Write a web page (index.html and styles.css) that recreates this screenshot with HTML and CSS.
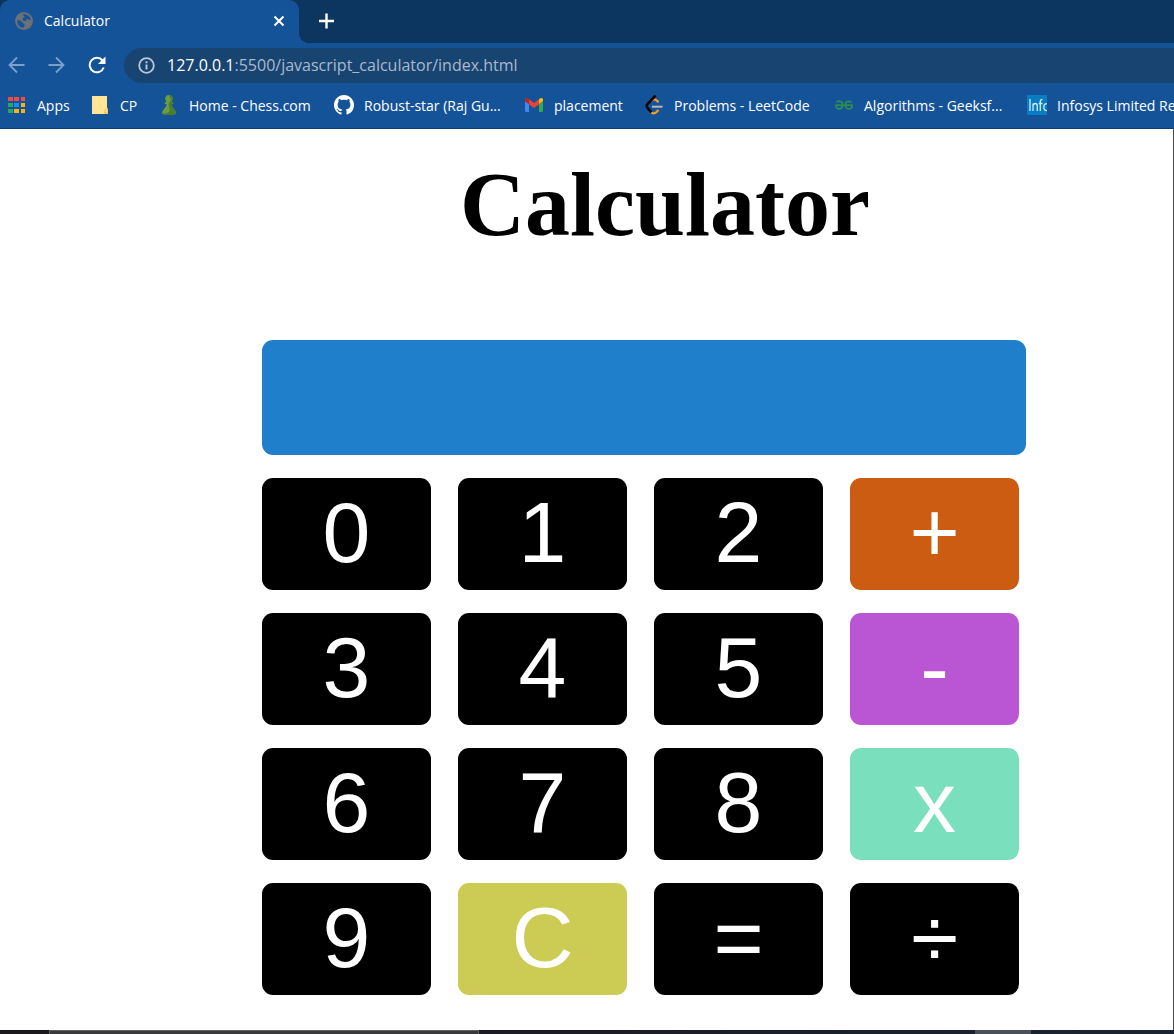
FILE: index.html
```html
<!DOCTYPE html>
<html lang="en">
<head>
<meta charset="utf-8">
<title>Calculator</title>
<link rel="stylesheet" href="styles.css">
</head>
<body>
<header class="browser">
  <div class="tabstrip">
    <div class="tab">
      <svg class="tab-icon" viewBox="0 0 18 18"><circle cx="9" cy="9" r="9" fill="#6b6f76"/><path d="M8 2.200C11 2 15.500 4 15.800 7.800C14 8 13.500 6.500 12 7C11 7.500 12 8.500 10.500 9C9 9.300 7.500 8.500 7.500 7C7.500 5.800 10 6 9.500 4.500C9.200 3.600 8 3.600 8 2.200ZM2.200 8.200C4.500 8.200 6.500 8.500 7 10.500C7.300 11.800 9.500 11.300 9.700 12.800C9.800 14 8.500 14.500 8.500 15.800C5 15.500 2 12.500 2.200 8.200Z" fill="#155399"/></svg>
      <span class="tab-title">Calculator</span>
      <button class="icon-button close" aria-label="Close tab"><svg width="12" height="12" viewBox="0 0 12 12"><path d="M1.500 1.500L10.500 10.500M10.500 1.500L1.500 10.500" stroke="#fff" stroke-width="2"/></svg></button>
    </div>
    <div class="tab-space">
      <button class="icon-button" aria-label="New tab"><svg width="16" height="16" viewBox="0 0 16 16"><path d="M8.500 0.500V15.500M1 8H16" stroke="#fff" stroke-width="2.400"/></svg></button>
    </div>
  </div>
  <div class="toolbar">
    <button class="icon-button" aria-label="Back"><svg width="18" height="18" viewBox="0 0 18 18"><path d="M16.500 9H2M9 1.500L1.500 9L9 16.500" fill="none" stroke="#7da0ca" stroke-width="1.800"/></svg></button>
    <button class="icon-button" aria-label="Forward"><svg width="18" height="18" viewBox="0 0 18 18"><path d="M0.500 9H15M8 1.500L15.500 9L8 16.500" fill="none" stroke="#7da0ca" stroke-width="1.800"/></svg></button>
    <button class="icon-button" aria-label="Reload"><svg width="18" height="18" viewBox="0 0 18 18"><path d="M15.700 11.500A7.200 7.200 0 1 1 14.500 4.500" fill="none" stroke="#fff" stroke-width="2"/><path d="M17.500 0.500V8H10Z" fill="#fff"/></svg></button>
    <div class="omnibox">
      <svg width="17" height="17" viewBox="0 0 17 17"><circle cx="8.500" cy="8.500" r="7.300" fill="none" stroke="#bcc8d5" stroke-width="1.800"/><path d="M8.500 7.500V12.500M8.500 4.300V6.200" stroke="#bcc8d5" stroke-width="1.900"/></svg>
      <span class="url"><span class="host">127.0.0.1</span>:5500/javascript_calculator/index.html</span>
    </div>
  </div>
  <nav class="bookmarks">
    <a href="#"><svg viewBox="0 0 20 20"><path fill="#f04a43" d="M1 2h5v4H1zM7 2h5v4H7zM14 2h4v4h-4z"/><path fill="#2ba55a" d="M1 8h5v4H1zM1 14h5v4H1z"/><path fill="#1d8bf5" d="M7 8h5v4H7z"/><path fill="#f7b21a" d="M14 8h4v4h-4zM7 14h5v4H7zM14 14h4v4h-4z"/></svg><span>Apps</span></a>
    <a href="#"><svg viewBox="0 0 20 20"><path fill="#ffe594" d="M2 1h15v12.500h1V19H2z"/><path fill="#f0cb63" d="M14 19v-4l2-1.500h2V19z"/><path fill="#ffe594" d="M15.500 15h1.500v2h-1.500z"/></svg><span>CP</span></a>
    <a href="#"><svg viewBox="0 0 20 20"><path fill="#6b9f3d" d="M10 0a3.700 3.700 0 0 1 2.500 6.500L14.500 8c0 1-1 1.200-2.300 1.200C12.500 12.500 17 14.500 17 18.500c-3 2-11 2-14 0C3 14.500 7.500 12.500 7.800 9.200 6.500 9.200 5.500 9 5.500 8l2-1.500A3.700 3.700 0 0 1 10 0z"/><path fill="#4b7c32" d="M10 0a3.700 3.700 0 0 1 2.500 6.500L14.500 8c0 1-1 1.200-2.300 1.200C12.500 12.500 17 14.500 17 18.500c-3 2-11 2-14 0 6 .5 9-2 7-6L9.500 8.500 12 5z"/></svg><span>Home - Chess.com</span></a>
    <a href="#"><svg viewBox="0 0 16 16"><path fill="#fff" d="M8 0C3.580 0 0 3.580 0 8c0 3.540 2.290 6.530 5.470 7.590.4.070.55-.17.55-.38 0-.19-.01-.82-.01-1.490-2.010.37-2.530-.49-2.690-.94-.09-.23-.48-.94-.82-1.130-.28-.15-.68-.52-.01-.53.63-.01 1.080.58 1.230.82.72 1.210 1.870.87 2.330.66.07-.52.28-.87.51-1.070-1.780-.2-3.640-.89-3.640-3.950 0-.87.31-1.590.82-2.150-.08-.2-.36-1.020.08-2.120 0 0 .67-.21 2.200.82.64-.18 1.320-.27 2-.27s1.360.09 2 .27c1.530-1.040 2.200-.82 2.200-.82.44 1.100.16 1.920.08 2.120.51.56.82 1.270.82 2.150 0 3.070-1.870 3.750-3.650 3.950.29.25.54.73.54 1.480 0 1.070-.01 1.930-.01 2.200 0 .21.150.46.55.38A8.010 8.010 0 0 0 16 8c0-4.420-3.580-8-8-8z"/></svg><span>Robust-star (Raj Gu...</span></a>
    <a href="#"><svg viewBox="0 0 20 20"><path fill="#4285f4" d="M1 6l4 3v8H2.500A1.500 1.500 0 0 1 1 15.500z"/><path fill="#34a853" d="M15 9l4-3v9.500a1.500 1.500 0 0 1-1.500 1.500H15z"/><path fill="#ea4335" d="M4.500 4L10 8l5.500-4v5L10 13 4.500 9z"/><path fill="#c5221f" d="M1 5c0-2 2-2.500 3.500-1.300L5 4v5L1 6z"/><path fill="#fbbc04" d="M15 4l.5-.3C17 2.500 19 3 19 5v1l-4 3z"/></svg><span>placement</span></a>
    <a href="#"><svg viewBox="0 0 20 20"><path d="M7.500 5.500q3-2.300 5.500.3l1.500 1.500M6.500 16.500q3 3.300 6 .5l2-2" fill="none" stroke="#f5a11d" stroke-width="2.300"/><path d="M11.500 .5L3.500 9.200Q2 11 3.500 13l4 4.300" fill="none" stroke="#070707" stroke-width="2.600"/><path d="M8 11.700h10.500" stroke="#b6b7ba" stroke-width="2"/></svg><span>Problems - LeetCode</span></a>
    <a href="#"><svg viewBox="0 0 20 20"><path d="M2.500 7.200Q5.500 5 8 7.500Q9.500 10.500 8 12.500Q5.500 15 2.800 13Q1.500 11.500 2 10.200H18Q18.500 13 16 13.800Q13 14.500 12 12Q10.500 9 12.500 7Q15 5.500 17.500 7.500" fill="none" stroke="#2d8b54" stroke-width="1.800"/></svg><span>Algorithms - Geeksf...</span></a>
    <a href="#"><svg viewBox="0 0 20 20"><path fill="#087dc3" d="M0 0h20v20H0z"/><path d="M3 4v12M6 16V8.500M6 10.500Q6.500 8.500 8.300 8.500Q10.300 8.500 10.300 11V16M13.300 16V6.500Q13.300 4.300 15.500 4.300M11.800 8.500H15.500M20 8.700Q16.800 8.700 16.800 12.200T20 15.600" fill="none" stroke="#d5ecf8" stroke-width="1.300"/></svg><span>Infosys Limited Re</span></a>
  </nav>
</header>
<main class="page">
  <h1>Calculator</h1>
  <div class="calculator">
    <input class="display" type="text" aria-label="Result">
    <div class="keys">
      <button>0</button><button>1</button><button>2</button><button class="plus">+</button>
      <button>3</button><button>4</button><button>5</button><button class="minus">-</button>
      <button>6</button><button>7</button><button>8</button><button class="times">x</button>
      <button>9</button><button class="clear">C</button><button>=</button><button>÷</button>
    </div>
  </div>
</main>
<footer class="taskbar"><div class="search"></div><div class="task"></div></footer>
</body>
</html>
```
FILE: styles.css
```css
* { box-sizing: border-box; }
body {
  margin: 0;
  min-height: 100vh;
  display: flex;
  flex-direction: column;
  background: #fff;
  overflow-x: hidden;
}
button { font: inherit; border: 0; padding: 0; cursor: pointer; }
svg { display: block; flex: none; }

.browser {
  background: #155399;
  border-bottom: 1px solid #103d70;
  color: #fff;
  font-family: "Segoe UI", "Open Sans", sans-serif;
  font-size: 14px;
  overflow: hidden;
}
.icon-button {
  display: grid;
  place-items: center;
  background: none;
}
.tabstrip { display: flex; height: 43px; background: #0c355f; }
.tab {
  display: flex;
  align-items: center;
  flex: 0 0 299px;
  padding: 0 14px 2px 15px;
  background: #155399;
  border-radius: 10px 10px 0 0;
}
.tab-icon { width: 18px; height: 18px; }
.tab-title { flex: 1; margin-left: 11px; }
.tab-space {
  display: flex;
  align-items: center;
  flex: 1;
  padding: 0 0 2px 19px;
  background: radial-gradient(circle at 100% 0, #0c355f 10px, #155399 10px) 0 100% / 10px 10px no-repeat;
}
.toolbar {
  display: flex;
  align-items: center;
  gap: 22px;
  height: 44px;
  padding-left: 8px;
}
.omnibox {
  display: flex;
  align-items: center;
  gap: 12px;
  flex: 1;
  height: 35px;
  margin-left: -4px;
  padding-left: 14px;
  border-radius: 18px 0 0 18px;
  background: #184472;
  color: #aab9ca;
  font-size: 16px;
}
.host { color: #fff; }
.bookmarks {
  display: grid;
  grid-template-columns: 83px 69px 175px 190px 120px 190px 193px auto;
  height: 41px;
  padding: 0 0 5px 7px;
}
.bookmarks a {
  display: flex;
  align-items: center;
  gap: 10px;
  color: #fff;
  text-decoration: none;
  white-space: nowrap;
}
.bookmarks svg { width: 20px; height: 20px; }

.page {
  flex: 1;
  padding: 24px 147px 35px 262px;
  border-right: 1px solid #4a4a4a;
}
h1 {
  margin: 0 72px 83px 114px;
  font: bold 90px/104px "Liberation Serif", serif;
  text-align: center;
}
.display {
  display: block;
  width: 100%;
  height: 115px;
  padding: 0 20px;
  border: 0;
  border-radius: 11px;
  background: #1f7fca;
  color: #fff;
  font: 86px "Liberation Sans", sans-serif;
}
.keys {
  display: grid;
  grid-template-columns: repeat(4, 1fr);
  grid-auto-rows: 112px;
  gap: 23px 27px;
  margin: 23px 7px 0 0;
}
.keys button {
  padding-bottom: 4px;
  border-radius: 11px;
  background: #000;
  color: #fff;
  font: 86px/96px "Liberation Sans", sans-serif;
}
.keys .plus { background: #cb5c12; }
.keys .minus { background: #ba55d3; }
.keys .times { background: #79dfbd; }
.keys .clear { background: #cccc54; }

.taskbar {
  display: flex;
  justify-content: space-between;
  height: 4px;
  padding: 0 143px 0 49px;
  background: linear-gradient(90deg, #1b191d, #1c1c24 50%, #1b2432);
}
.search { width: 430px; background: #39383b; border: 1px solid #606063; border-bottom: 0; }
.task { width: 56px; background: #4a4f59; }
```
